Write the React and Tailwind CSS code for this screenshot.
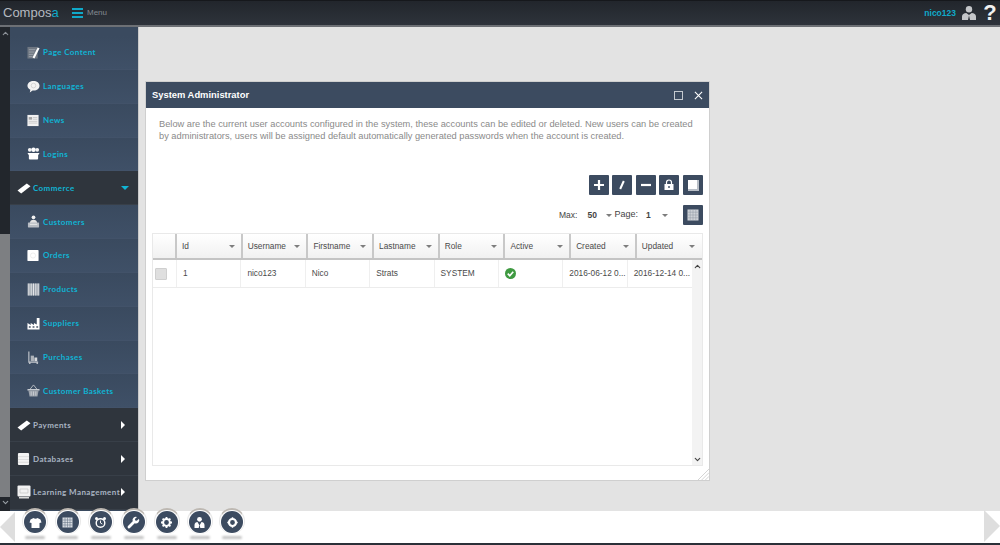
import { ChevronUp, ChevronDown } from 'lucide-react';

const PageIcon = () => (
    <svg viewBox="0 0 14 14" className="w-[13px] h-[13px]">
        <rect x="0.5" y="1" width="11" height="12.5" fill="#6f7782" />
        <path d="M2 4h7M2 6.5h6M2 9h5M2 11.5h4" stroke="#aab0b8" strokeWidth="0.8" />
        <path d="M6 12.5 11.5 1.5 13.5 2.5 8 13.5z" fill="#fff" />
    </svg>
);
const BubbleIcon = () => (
    <svg viewBox="0 0 14 14" className="w-[13px] h-[13px]">
        <path d="M7 1c3.6 0 6.5 2.2 6.5 5.2S10.600 11.400 7.500 11.400c-.5 0-1 0-1.500-.1L3 13.500l.6-3C1.700 9.500.5 8 .5 6.200.5 3.200 3.400 1 7 1z" fill="#f2f2f2" />
        <circle cx="7" cy="6" r="2.500" fill="none" stroke="#c8c8c8" strokeWidth="0.7" />
    </svg>
);
const NewsIcon = () => (
    <svg viewBox="0 0 14 14" className="w-[12px] h-[13px]">
        <rect x="0.5" y="0.5" width="13" height="13" fill="#f1f1f1" />
        <rect x="2" y="3" width="4" height="3" fill="#a5a5a5" />
        <path d="M7 3.500h5M7 5.500h5M2 8h10M2 10h10" stroke="#bbb" strokeWidth="0.8" />
    </svg>
);
const LoginsIcon = () => (
    <svg viewBox="0 0 14 14" className="w-[13px] h-[13px]">
        <circle cx="3" cy="3" r="2" fill="#f4f4f4" />
        <circle cx="11" cy="3" r="2" fill="#f4f4f4" />
        <circle cx="7" cy="3" r="2.400" fill="#fff" />
        <path d="M.5 6.500h13L12 9v3.500a1 1 0 0 1-1 1H3a1 1 0 0 1-1-1V9z" fill="#fff" />
    </svg>
);
const TicketIcon = () => (
    <svg viewBox="0 0 14 14" className="w-[14px] h-[14px]">
        <path d="M.5 9.500 9.800 2.500l3.700 2.800-9.300 7.200z" fill="#fff" />
    </svg>
);
const CustomersIcon = () => (
    <svg viewBox="0 0 14 14" className="w-[13px] h-[13px]">
        <circle cx="7" cy="2.500" r="2" fill="#f2f2f2" />
        <path d="M3 9c0-3 2-4 4-4s4 1 4 4z" fill="#e2e2e2" />
        <rect x="1" y="8" width="12" height="5.500" rx="0.500" fill="#b7bcc3" />
        <rect x="3" y="9.500" width="8" height="1" fill="#eee" />
    </svg>
);
const OrdersIcon = () => (
    <svg viewBox="0 0 14 14" className="w-[12px] h-[13px]">
        <rect x="0.5" y="0.500" width="13" height="13" rx="1" fill="#fff" />
        <circle cx="7" cy="7" r="3" fill="none" stroke="#e6e6e6" strokeWidth="0.8" />
    </svg>
);
const BarcodeIcon = () => (
    <svg viewBox="0 0 14 14" className="w-[13px] h-[13px]">
        <rect x="0.500" y="0.500" width="13" height="13" fill="#98a0aa" />
        <path d="M2 .5v13M4.500 .5v13M7 .5v13M9.500 .5v13M12 .5v13" stroke="#e4e6e8" strokeWidth="1.100" />
    </svg>
);
const FactoryIcon = () => (
    <svg viewBox="0 0 14 14" className="w-[13px] h-[13px]">
        <path d="M.5 13.500V6.500l3.500 2V6.500l3.500 2V6.500l3 1.500V1h3v12.500z" fill="#fff" />
        <rect x="2" y="10" width="2" height="1.500" fill="#3c4b5f" />
        <rect x="6" y="10" width="2" height="1.500" fill="#3c4b5f" />
        <rect x="10" y="10" width="2" height="1.500" fill="#3c4b5f" />
    </svg>
);
const TrolleyIcon = () => (
    <svg viewBox="0 0 14 14" className="w-[13px] h-[13px]">
        <path d="M2 .5v11.500h10" fill="none" stroke="#c6cacf" strokeWidth="1.200" />
        <rect x="4" y="5" width="3.500" height="6" fill="#aeb3ba" />
        <rect x="8" y="7" width="3" height="4" fill="#d8dadd" />
        <circle cx="3" cy="13" r="1" fill="#c6cacf" />
        <circle cx="11" cy="13" r="1" fill="#c6cacf" />
    </svg>
);
const BasketIcon = () => (
    <svg viewBox="0 0 14 14" className="w-[13px] h-[13px]">
        <path d="M3 6 7 1l4 5" fill="none" stroke="#c9ccd0" strokeWidth="0.900" />
        <path d="M.5 5.500h13v1.500h-13z" fill="#d8dadd" />
        <path d="M1.500 7h11l-1.200 6.500H2.700z" fill="#9aa1aa" />
        <path d="M4.500 8v4.500M7 8v4.500M9.500 8v4.500" stroke="#dfe1e4" strokeWidth="0.700" />
    </svg>
);
const DatabaseIcon = () => (
    <svg viewBox="0 0 14 14" className="w-[13px] h-[14px]">
        <rect x="1" y="0.500" width="12" height="13" rx="1" fill="#f4f4f4" />
        <path d="M1 4.500h12M1 7.500h12M1 10.500h12" stroke="#c9c9c9" strokeWidth="0.600" />
    </svg>
);
const LearningIcon = () => (
    <svg viewBox="0 0 14 14" className="w-[14px] h-[14px]">
        <rect x="0.500" y="0.500" width="13" height="11" rx="1" fill="#f2f2f2" />
        <path d="M3 4h8v4H3z" fill="none" stroke="#c4c4c4" strokeWidth="0.700" />
        <rect x="2" y="12" width="10" height="1.500" fill="#d9d9d9" />
    </svg>
);

const subItem = 'text-[#10b4d4]';

const menuItems = [
    { label: 'Page Content', icon: PageIcon },
    { label: 'Languages', icon: BubbleIcon },
    { label: 'News', icon: NewsIcon },
    { label: 'Logins', icon: LoginsIcon },
    { label: 'Commerce', icon: TicketIcon, top: 'open' },
    { label: 'Customers', icon: CustomersIcon },
    { label: 'Orders', icon: OrdersIcon },
    { label: 'Products', icon: BarcodeIcon },
    { label: 'Suppliers', icon: FactoryIcon },
    { label: 'Purchases', icon: TrolleyIcon },
    { label: 'Customer Baskets', icon: BasketIcon },
    { label: 'Payments', icon: TicketIcon, top: 'closed' },
    { label: 'Databases', icon: DatabaseIcon, top: 'closed' },
    { label: 'Learning Management', icon: LearningIcon, top: 'closed' },
];

function SidebarRow({ item }) {
    const Icon = item.icon;
    if (item.top) {
        return (
            <div className="h-[33.85px] shrink-0 flex items-center pl-[7px] pr-[13px] bg-[#2f353d] border-b border-[#383f48]">
                <span className="w-[16px] flex justify-start shrink-0"><Icon /></span>
                <span className={`text-[8px] font-bold tracking-[0.400px] whitespace-nowrap flex-1 ${item.top === 'open' ? subItem : 'text-[#a9b4c2]'}`}>
                    {item.label}
                </span>
                {item.top === 'open' ? (
                    <span className="w-0 h-0 mr-[-4px] border-x-[4px] border-x-transparent border-t-[4px] border-t-[#10b4d4]" />
                ) : (
                    <span className="w-0 h-0 border-y-[4px] border-y-transparent border-l-[4px] border-l-white" />
                )}
            </div>
        );
    }
    return (
        <div className="h-[33.85px] shrink-0 flex items-center pl-[17px] bg-gradient-to-b from-[#3a4a5f] to-[#3f5067] border-b border-[#425269]">
            <span className="w-[16px] flex justify-start shrink-0"><Icon /></span>
            <span className={`text-[8px] font-bold tracking-[0.400px] whitespace-nowrap ${subItem}`}>
                {item.label}
            </span>
        </div>
    );
}

function Sidebar() {
    return (
        <aside className="w-[139px] shrink-0 flex h-full overflow-hidden border-r border-[#c9c9c9]">
            <div className="w-[10px] shrink-0 flex flex-col bg-[#22262c]">
                <ChevronUp size={9} strokeWidth={3} color="#8b9097" className="mt-[2px] ml-[0.500px]" />
                <div className="mt-auto h-[263px] bg-[#7d7f82]" />
                <div className="h-[11px] flex justify-center items-center">
                    <ChevronDown size={9} strokeWidth={3} color="#9aa0a6" />
                </div>
                <div className="h-[3px]" />
            </div>
            <div className="flex-1 min-w-0 bg-[#3a4a5f] pt-[9px] flex flex-col font-['Lato',sans-serif]">
                {menuItems.map((item) => (
                    <SidebarRow key={item.label} item={item} />
                ))}
            </div>
        </aside>
    );
}

function Caret({ className = '' }) {
    return <span className={`w-0 h-0 border-x-[3.500px] border-x-transparent border-t-[3.500px] border-t-[#7d7d7d] ${className}`} />;
}

function ToolButton({ children }) {
    return (
        <button className="w-[20px] h-[20px] bg-[#3c4b60] rounded-[1px] flex items-center justify-center">
            {children}
        </button>
    );
}

const GridGlyph = () => (
    <svg viewBox="0 0 12 12" className="w-[12px] h-[12px]">
        <rect x="0.500" y="0.500" width="11" height="11" fill="#cfd3d8" />
        <path d="M.5 3.200h11M.5 6h11M.5 8.800h11M3.200 .5v11M6 .5v11M8.800 .5v11" stroke="#8c95a1" strokeWidth="0.500" />
    </svg>
);

const columns = ['Id', 'Username', 'Firstname', 'Lastname', 'Role', 'Active', 'Created', 'Updated'];
const user = ['1', 'nico123', 'Nico', 'Strats', 'SYSTEM', null, '2016-06-12 0...', '2016-12-14 0...'];

function UsersTable() {
    return (
        <div className="mx-[6px] h-[233px] flex flex-col border border-[#e9e9e9] text-[8.300px] text-[#4a4a4a]">
            <div className="h-[26px] shrink-0 flex bg-gradient-to-b from-white to-[#f1f1f1] border-b-2 border-[#c4c4c4]">
                <div className="w-[22px] shrink-0" />
                {columns.map((name) => (
                    <div key={name} className="w-[65.700px] shrink-0 flex items-center pl-[5px] pr-[6px] border-l-2 border-[#c8c8c8]">
                        <span className="flex-1">{name}</span>
                        <Caret />
                    </div>
                ))}
            </div>
            <div className="flex flex-1 min-h-0">
                <div className="flex-1 min-w-0 overflow-hidden">
                    <div className="h-[28px] flex border-b border-[#ececec]">
                        <div className="w-[23px] shrink-0 flex items-center justify-start pl-[2px]">
                            <span className="w-[12px] h-[12px] bg-[#dfdfdf] border border-[#cfcfcf] rounded-[1px]" />
                        </div>
                        {user.map((value, i) => (
                            <div key={columns[i]} className="w-[64.400px] shrink-0 flex items-center pl-[6px] border-l border-[#efefef] whitespace-nowrap">
                                {value ?? (
                                    <svg viewBox="0 0 12 12" className="w-[11px] h-[11px]">
                                        <circle cx="6" cy="6" r="6" fill="#3f9a41" />
                                        <path d="M3 6.200 5.200 8.400 9 4" fill="none" stroke="#fff" strokeWidth="1.800" />
                                    </svg>
                                )}
                            </div>
                        ))}
                    </div>
                </div>
                <div className="w-[10px] shrink-0 flex flex-col justify-between items-center bg-[#f3f3f3]">
                    <ChevronUp size={9} strokeWidth={3} color="#444" className="mt-[2px]" />
                    <ChevronDown size={9} strokeWidth={3} color="#444" className="mb-[1px]" />
                </div>
            </div>
        </div>
    );
}

function AdminWindow() {
    return (
        <div className="absolute left-[145px] top-[81px] w-[565px] h-[400px] bg-white border border-[#cfcfcf] font-['Liberation_Sans',Arial,sans-serif]">
            <div className="h-[26px] bg-[#3c4b60] flex items-center pl-[6px] pr-[5px]">
                <span className="text-white text-[9.400px] font-bold flex-1">System Administrator</span>
                <span className="w-[9px] h-[9px] border border-[#c4c9cf] mr-[11px]" />
                <svg viewBox="0 0 10 10" className="w-[9px] h-[9px] mr-[1px]">
                    <path d="M1 1l8 8M9 1l-8 8" stroke="#fff" strokeWidth="1.200" />
                </svg>
            </div>
            <p className="mt-[10px] px-[13px] text-[9.280px] leading-[12px] text-[#8a8a8a] whitespace-nowrap">
                Below are the current user accounts configured in the system, these accounts can be edited or deleted. New users can be created
                <br />
                by administrators, users will be assigned default automatically generated passwords when the account is created.
            </p>
            <div className="mt-[33px] flex justify-end gap-[3.600px] pr-[6px]">
                <ToolButton>
                    <svg viewBox="0 0 12 12" className="w-[12px] h-[12px]"><path d="M6 1v10M1 6h10" stroke="#fff" strokeWidth="2.200" /></svg>
                </ToolButton>
                <ToolButton>
                    <svg viewBox="0 0 12 12" className="w-[12px] h-[12px]"><path d="M7.800 2 4.200 10" stroke="#fff" strokeWidth="2" /></svg>
                </ToolButton>
                <ToolButton>
                    <svg viewBox="0 0 12 12" className="w-[12px] h-[12px]"><path d="M1 6h10" stroke="#fff" strokeWidth="2.200" /></svg>
                </ToolButton>
                <ToolButton>
                    <svg viewBox="0 0 12 12" className="w-[12px] h-[12px]">
                        <path d="M3.500 5V3.500a2.500 2.500 0 0 1 5 0V5" fill="none" stroke="#fff" strokeWidth="1.200" />
                        <rect x="1.500" y="5" width="9" height="6" fill="#fff" />
                        <rect x="5.300" y="7" width="1.400" height="2" fill="#3c4b60" />
                    </svg>
                </ToolButton>
                <ToolButton>
                    <span className="w-[11px] h-[11px] bg-white shadow-[inset_-2px_-2px_0_#b9bfc7]" />
                </ToolButton>
            </div>
            <div className="mt-[10px] h-[20px] flex items-center pr-[6px] text-[8.500px] text-[#444]">
                <span className="ml-[413px]">Max:</span>
                <span className="ml-[10px] w-[11px] font-bold">50</span>
                <Caret className="ml-[8px]" />
                <span className="ml-[2px] text-[9px]">Page:</span>
                <span className="ml-[8px] w-[8px] font-bold">1</span>
                <Caret className="ml-[8px]" />
                <span className="ml-auto"><ToolButton><GridGlyph /></ToolButton></span>
            </div>
            <div className="mt-[8px]">
                <UsersTable />
            </div>
            <svg viewBox="0 0 12 12" className="absolute right-0 bottom-0 w-[11px] h-[11px]">
                <path d="M12 0 0 12M12 4 4 12M12 8 8 12" stroke="#bcbcbc" strokeWidth="0.700" />
            </svg>
        </div>
    );
}

const dockIcons = [
    <path key="a" d="M3 4.500 6 3c1 1 3 1 4 0l3 1.500 1 3-2 .5V13H4V8L2 7.500z" fill="#fff" transform="translate(-0.500 0)" />,
    <g key="b">
        <rect x="2.500" y="2.500" width="10" height="10" fill="#d9dde2" />
        <path d="M2.500 5h10M2.500 7.500h10M2.500 10h10M5 2.500v10M7.500 2.500v10M10 2.500v10" stroke="#5b6a7d" strokeWidth="0.500" />
    </g>,
    <g key="c">
        <circle cx="7.500" cy="8" r="4.300" fill="#3c4b60" stroke="#fff" strokeWidth="1.400" />
        <path d="M7.500 5.500V8l1.800 1" fill="none" stroke="#fff" strokeWidth="0.900" />
        <circle cx="3.500" cy="3.500" r="1.500" fill="#fff" />
        <circle cx="11.500" cy="3.500" r="1.500" fill="#fff" />
    </g>,
    <path key="d" d="M13 3.800 10.800 5.800 9.300 5.400 8.900 3.900 11 2a3.400 3.400 0 0 0-4.300 4.300L2 11a1.300 1.300 0 0 0 2 2l4.700-4.700A3.400 3.400 0 0 0 13 3.800z" fill="#fff" />,
    <g key="e">
        <circle cx="7.500" cy="7.500" r="3.400" fill="none" stroke="#fff" strokeWidth="2" />
        <path d="M7.500 2v2M7.500 11v2M2 7.500h2M11 7.500h2M3.600 3.600 5 5M10 10l1.400 1.400M3.600 11.400 5 10M10 5l1.400-1.400" stroke="#fff" strokeWidth="1.800" />
    </g>,
    <g key="f">
        <circle cx="7.500" cy="4.300" r="2.400" fill="#fff" />
        <path d="M2.500 13V10c0-2 1.500-3 3-3l2 3.500L9.500 7c1.500 0 3 1 3 3v3z" fill="#fff" />
        <path d="M7.500 9.500 6.700 13h1.600z" fill="#3c4b60" />
    </g>,
    <g key="g">
        <circle cx="7.500" cy="7.500" r="3.500" fill="none" stroke="#fff" strokeWidth="2.200" />
        <path d="M7.500 2.300v1.500M7.500 11.200v1.500M2.300 7.500h1.500M11.200 7.500h1.500" stroke="#fff" strokeWidth="1.500" />
    </g>,
];

function Dock() {
    return (
        <div className="h-[34px] shrink-0 relative bg-white flex items-center justify-between border-b-2 border-[#2b3038]">
            <span className="w-0 h-0 border-y-[15px] border-y-transparent border-r-[15px] border-r-[#dedede]" />
            <div className="absolute left-[22px] top-[-3px] flex gap-[6.800px]">
                {dockIcons.map((glyph, i) => (
                    <div key={i} className="w-[26.100px] flex flex-col items-center">
                        <div className="w-[26px] h-[26px] rounded-full border-t-2 border-t-[#bdb8b2] border-x border-x-[#e8e8e8] bg-white p-[1px]">
                            <div className="w-full h-full rounded-full bg-[#3c4b60] flex items-center justify-center">
                                <svg viewBox="0 0 15 15" className="w-[15px] h-[15px]">{glyph}</svg>
                            </div>
                        </div>
                        <span className="mt-[2px] w-[20px] h-[3px] rounded-full bg-[#c4c4c4] blur-[1px]" />
                    </div>
                ))}
            </div>
            <span className="w-0 h-0 border-y-[16px] border-y-transparent border-l-[16px] border-l-[#dedede] -mt-[2px]" />
        </div>
    );
}

function TopBar() {
    return (
        <header className="h-[27px] shrink-0 flex items-center bg-gradient-to-b from-[#22262c] to-[#2e333b] border-t border-t-[#16181c] border-b-2 border-b-[#6d7075] font-['Liberation_Sans',Arial,sans-serif]">
            <span className="ml-[3px] w-[69px] text-[13px] text-[#b5bac0]">Compos<span className="text-[#10a9c9]">a</span></span>
            <span className="w-[11px] flex flex-col gap-[2px]">
                <span className="h-[2px] bg-[#10a9c9]" />
                <span className="h-[2px] bg-[#10a9c9]" />
                <span className="h-[2px] bg-[#10a9c9]" />
            </span>
            <span className="ml-[4px] text-[8px] text-[#858a90]">Menu</span>
            <span className="ml-auto text-[8.500px] font-bold text-[#10a9c9]">nico123</span>
            <svg viewBox="0 0 16 16" className="ml-[5px] w-[16px] h-[16px]">
                <circle cx="8" cy="4.200" r="3.200" fill="#c4c6c9" />
                <path d="M1 15v-3.500C1 9.500 3 8 5.300 8L8 10l2.700-2C13 8 15 9.500 15 11.500V15z" fill="#c4c6c9" />
                <path d="M8 10.500 7 15h2z" fill="#2a2e35" />
            </svg>
            <span className="ml-[6px] mr-[3px] w-[14px] text-[22px] leading-none font-bold text-[#f1f1f1] text-center">?</span>
        </header>
    );
}

export default function App() {
    return (
        <div className="relative w-[1000px] h-[545px] flex flex-col overflow-hidden bg-[#e3e3e3]">
            <TopBar />
            <div className="flex-1 min-h-0 flex">
                <Sidebar />
                <main className="flex-1" />
            </div>
            <AdminWindow />
            <Dock />
        </div>
    );
}
